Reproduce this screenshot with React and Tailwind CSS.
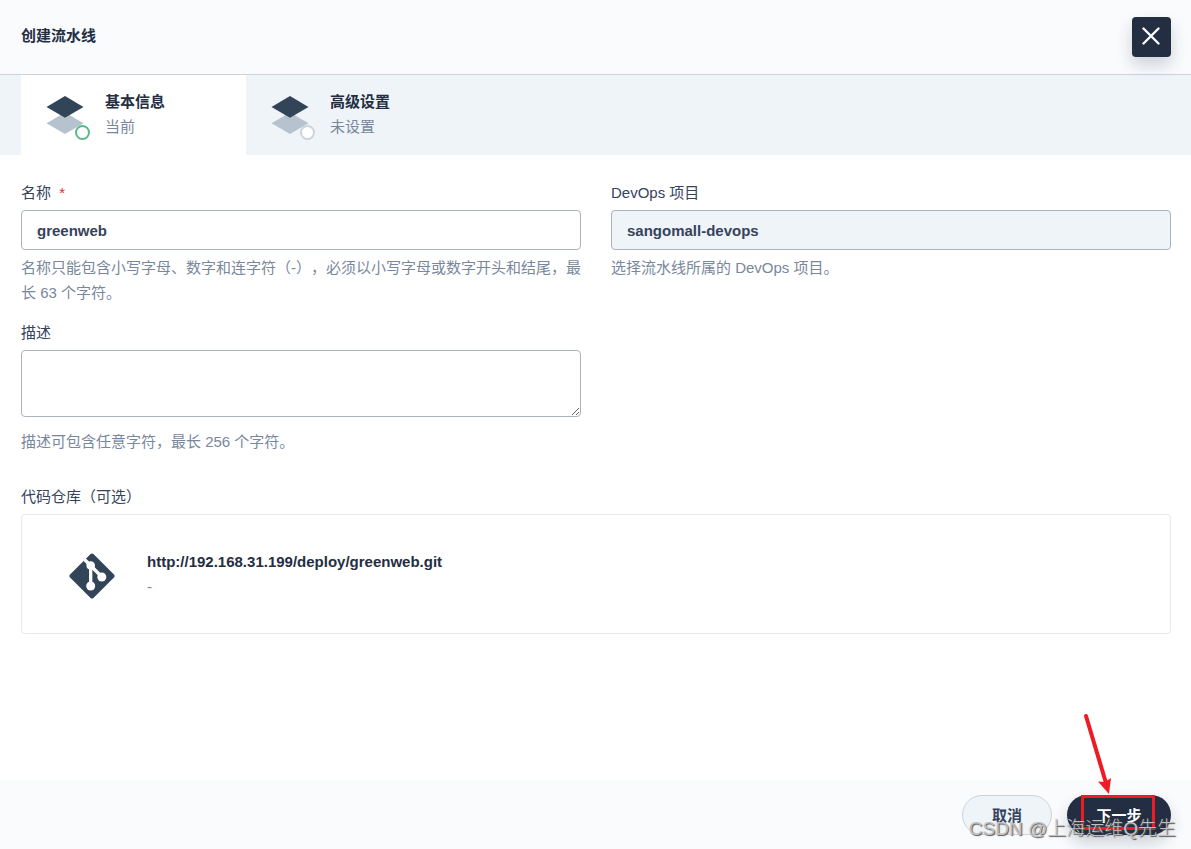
import { useState } from "react";

const steps = [
  { id: "basic", title: "基本信息", status: "当前", active: true },
  { id: "advanced", title: "高级设置", status: "未设置", active: false },
];

function LayersIcon() {
  return (
    <svg className="w-10 h-10" viewBox="0 0 40 40" aria-hidden="true">
      <path d="M20 17.5L38.5 28.3L20 39L1.5 28.3Z" fill="#b6c2cd" />
      <path d="M20 1L38.5 12L20 22.8L1.5 12Z" fill="#324558" />
    </svg>
  );
}

function GitIcon() {
  return (
    <svg className="w-[46px] h-[46px] shrink-0 mt-1" viewBox="0 0 46 46" aria-hidden="true">
      <path
        d="M23 2.500L43.500 23L23 43.500L2.500 23Z"
        fill="#324558"
        stroke="#324558"
        strokeWidth="4"
        strokeLinejoin="round"
      />
      <path d="M14 5L22 13L33 24M21.700 12.500V33" stroke="#fff" strokeWidth="3.300" fill="none" />
      <circle cx="21.700" cy="12.500" r="4.300" fill="#fff" />
      <circle cx="21.700" cy="33" r="4.500" fill="#fff" />
      <circle cx="32.800" cy="24" r="4.500" fill="#fff" />
    </svg>
  );
}

function Step({ step }) {
  return (
    <button
      type="button"
      className={`w-[225px] h-20 px-6 flex items-center gap-5 text-left ${step.active ? "bg-white" : ""}`}
    >
      <span className="relative shrink-0">
        <LayersIcon />
        <span
          className={`absolute -right-[5px] -bottom-[5px] w-[15px] h-[15px] rounded-full border-2 bg-white ${
            step.active ? "border-[#55bc8a]" : "border-[#ccd3db]"
          }`}
        />
      </span>
      <span className="pb-0.5">
        <span className="block font-bold text-[#242e42]">{step.title}</span>
        <span className="block text-[#79879c]">{step.status}</span>
      </span>
    </button>
  );
}

// Red arrow and frame drawn over the "next" button
function Highlight() {
  return (
    <>
      <svg
        className="absolute left-3 -top-[82px] w-10 h-[82px] pointer-events-none"
        viewBox="0 0 40 82"
        aria-hidden="true"
      >
        <path d="M7 3L27 70" stroke="#ed1c24" strokeWidth="4" strokeLinecap="round" />
        <path d="M30 81L19 68.500L26 69L32 65Z" fill="#ed1c24" />
      </svg>
      <span className="absolute left-[14px] top-0 w-[74px] h-[35px] border-3 border-[#ed1c24] pointer-events-none" />
    </>
  );
}

function App() {
  const [name, setName] = useState("greenweb");
  const [description, setDescription] = useState("");

  return (
    <div className="min-h-screen flex flex-col bg-white text-[15px] leading-[25px] text-[#36435c] font-['Liberation_Sans','Noto_Sans_CJK_SC',sans-serif] [text-spacing-trim:space-all]">
      {/* Header */}
      <header className="h-[75px] pl-[21px] pr-5 flex items-center justify-between bg-[#f9fbfd] border-b border-[#ccd3db]">
        <h1 className="pb-1 font-bold text-[#242e42]">创建流水线</h1>
        <button
          type="button"
          aria-label="关闭"
          className="w-[39px] h-10 flex items-center justify-center rounded bg-[#242e42] shadow-[0_8px_16px_0_rgba(36,46,66,0.2)] z-10"
        >
          <svg className="w-5 h-5" viewBox="0 0 20 20" aria-hidden="true">
            <path d="M1.500 1.500L16.500 16.500M16.500 1.500L1.500 16.500" stroke="#f9fbfd" strokeWidth="2.400" strokeLinecap="round" />
          </svg>
        </button>
      </header>

      {/* Steps */}
      <nav className="pl-[21px] flex bg-[#eff4f9]">
        {steps.map((step) => (
          <Step key={step.id} step={step} />
        ))}
      </nav>

      {/* Form */}
      <main className="flex-1 pl-[21px] pr-5 pt-[25px]">
        <div className="grid grid-cols-2 gap-x-[30px] gap-y-[15px]">
          <div>
            <label htmlFor="name" className="block">
              名称 <span className="ml-1 text-[#e0322b]">*</span>
            </label>
            <input
              id="name"
              type="text"
              value={name}
              onChange={(e) => setName(e.target.value)}
              className="block w-full h-10 mt-[5px] px-[15px] rounded border border-[#abb4be] bg-white font-bold outline-none"
            />
            <p className="mt-[5px] text-[#79879c]">
              名称只能包含小写字母、数字和连字符（-），必须以小写字母或数字开头和结尾，最长 63 个字符。
            </p>
          </div>
          <div>
            <label htmlFor="project" className="block">DevOps 项目</label>
            <input
              id="project"
              type="text"
              value="sangomall-devops"
              disabled
              className="block w-full h-10 mt-[5px] px-[15px] rounded border border-[#abb4be] bg-[#eff4f9] font-bold"
            />
            <p className="mt-[5px] text-[#79879c]">选择流水线所属的 DevOps 项目。</p>
          </div>
          <div>
            <label htmlFor="description" className="block">描述</label>
            <textarea
              id="description"
              value={description}
              onChange={(e) => setDescription(e.target.value)}
              className="block w-full h-[67px] mt-[5px] px-[15px] py-2 rounded border border-[#abb4be] bg-white outline-none"
            />
            <p className="mt-3 text-[#79879c]">描述可包含任意字符，最长 256 个字符。</p>
          </div>
        </div>

        {/* Code repository */}
        <section className="mt-[30px]">
          <h2>代码仓库（可选）</h2>
          <div className="h-[120px] mt-[5px] px-[47px] flex items-center gap-8 rounded border border-[#e3e9ef]">
            <GitIcon />
            <div>
              <div className="font-bold text-[#242e42]">http://192.168.31.199/deploy/greenweb.git</div>
              <div className="text-[#79879c]">-</div>
            </div>
          </div>
        </section>
      </main>

      {/* Footer */}
      <footer className="relative h-[69px] pr-5 pt-[15px] flex justify-end items-start gap-[15px] bg-[#f9fbfd]">
        <button
          type="button"
          className="w-[90px] h-10 rounded-full border border-[#ccd3db] bg-[#eff4f9] font-bold"
        >
          取消
        </button>
        <div className="relative">
          <button
            type="button"
            className="w-[104px] h-10 rounded-full bg-[#242e42] font-bold text-white shadow-[0_8px_16px_0_rgba(36,46,66,0.2)]"
          >
            下一步
          </button>
          <Highlight />
        </div>
        <span className="absolute right-[15px] bottom-2 text-[19px] font-light text-[#c0c0c0] whitespace-nowrap pointer-events-none [text-shadow:1px_1px_1px_#555]">
          CSDN @上海运维Q先生
        </span>
      </footer>
    </div>
  );
}

export default App;
